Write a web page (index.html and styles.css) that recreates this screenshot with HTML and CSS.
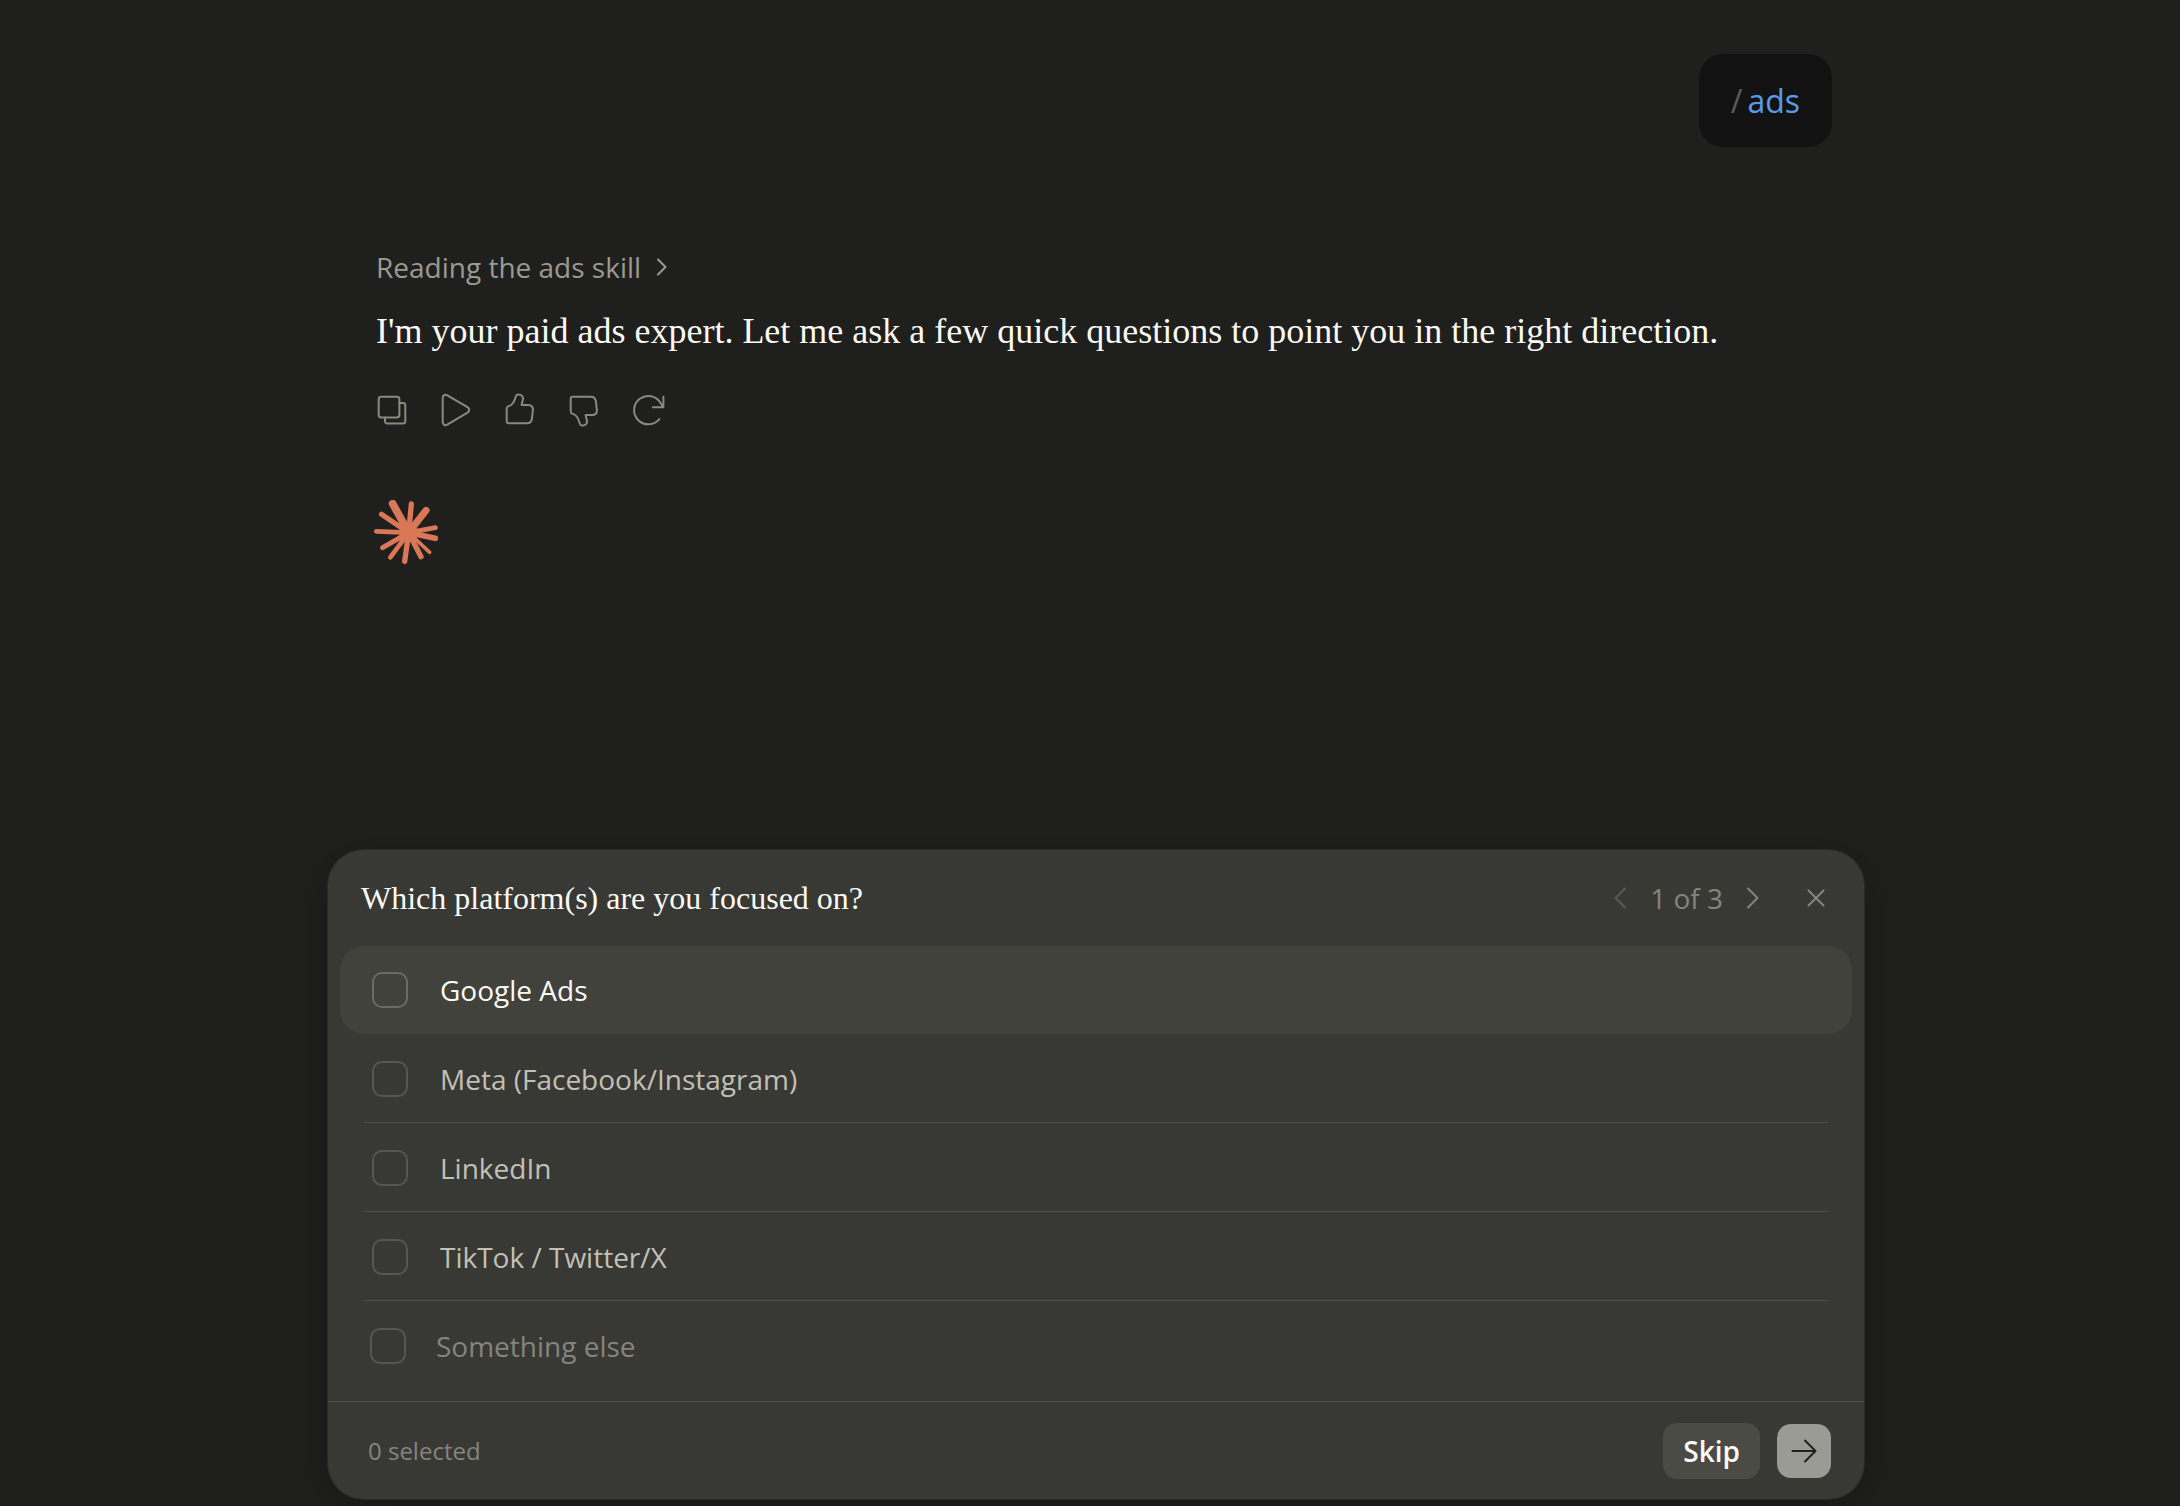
FILE: index.html
```html
<!DOCTYPE html>
<html lang="en">
  <head>
    <meta charset="UTF-8" />
    <meta name="viewport" content="width=device-width, initial-scale=1.0" />
    <title>Ads skill chat</title>
    <link rel="stylesheet" href="styles.css">
  </head>
  <body>
    <main class="chat">
      <div class="bubble"><span class="slash">/</span><span class="command">ads</span></div>

      <section class="reply">
        <button class="skill" type="button">
          Reading the ads skill
          <svg width="10" height="18" viewBox="0 0 10 18"><path d="M1 1.5 8.5 9 1 16.5" /></svg>
        </button>
        <p class="message">I'm your paid ads expert. Let me ask a few quick questions to point you in the right direction.</p>
        <div class="actions">
          <button type="button" aria-label="Copy">
            <svg width="40" height="40" viewBox="0 0 40 40"><rect x="6.7" y="6.7" width="20.7" height="20.7" rx="2.4" /><path d="M13 27.6v3.6a2.2 2.2 0 0 0 2.2 2.2h15.9a2.2 2.2 0 0 0 2.2-2.2V15.3a2.2 2.2 0 0 0-2.2-2.2h-3.6" /></svg>
          </button>
          <button type="button" aria-label="Read aloud">
            <svg width="40" height="40" viewBox="0 0 40 40"><path d="M6.7 8.2c0-2.8 2.2-4.3 4.6-2.9l20.2 11.8c2.2 1.4 2.2 4.2 0 5.6L11.3 34.7c-2.4 1.4-4.6-.1-4.6-2.9z" /></svg>
          </button>
          <button type="button" aria-label="Good response">
            <svg width="40" height="40" viewBox="0 0 40 40"><path d="M6.7 31.1V18.4c0-1.3.8-2 2-2.3 3-.7 5.3-3.9 6.4-7.6l.9-2.5c.6-1.6 2.5-1.8 4.5-1.1 2.3.8 2.8 2.8 2.3 5.1l-1.3 4.9h6.8c3 0 4.8 1.9 4.6 4.7l-1 9c-.4 3-2 4.7-5 4.7h-18c-1.3 0-2.2-.9-2.2-2.2z" /></svg>
          </button>
          <button type="button" aria-label="Bad response">
            <svg width="40" height="40" viewBox="0 0 40 40"><path transform="matrix(1 0 0 -1 0 40)" d="M6.7 31.1V18.4c0-1.3.8-2 2-2.3 3-.7 5.3-3.9 6.4-7.6l.9-2.5c.6-1.6 2.5-1.8 4.5-1.1 2.3.8 2.8 2.8 2.3 5.1l-1.3 4.9h6.8c3 0 4.8 1.9 4.6 4.7l-1 9c-.4 3-2 4.7-5 4.7h-18c-1.3 0-2.2-.9-2.2-2.2z" /></svg>
          </button>
          <button type="button" aria-label="Retry">
            <svg width="40" height="40" viewBox="0 0 40 40"><path d="M31.3 29.1A14.2 14.2 0 1 1 32.6 13l2.6 4.2M35.4 6.8v10.5H24.8" /></svg>
          </button>
        </div>
        <svg class="burst" width="64" height="64" viewBox="42 60 192 192">
          <circle cx="146" cy="158" r="28" />
          <path stroke-width="23" d="M146 158 98 71" />
          <path stroke-width="16" d="m146 158 8-86" />
          <path stroke-width="21" d="m146 158 52-67" />
          <path stroke-width="15" d="m146 158 80-15" />
          <path stroke-width="17" d="m146 158 80 17" />
          <path stroke-width="11" d="m146 158 63 59" />
          <path stroke-width="16" d="m146 158 37 72" />
          <path stroke-width="16" d="m146 158-12 86" />
          <path stroke-width="14" d="m146 158-55 74" />
          <path stroke-width="15" d="m146 158-78 45" />
          <path stroke-width="14" d="m146 158-97-4" />
          <path stroke-width="16" d="m146 158-81-55" />
        </svg>
      </section>
    </main>

    <form class="card">
      <div class="card-head">
        <h2>Which platform(s) are you focused on?</h2>
        <div class="pager">
          <button type="button" class="prev" aria-label="Previous" disabled>
            <svg width="14" height="22" viewBox="0 0 14 22"><path d="M12 1.5 2.5 11l9.5 9.5" /></svg>
          </button>
          <span>1 of 3</span>
          <button type="button" aria-label="Next">
            <svg width="14" height="22" viewBox="0 0 14 22"><path d="M2 1.5 11.5 11 2 20.5" /></svg>
          </button>
        </div>
        <button type="button" class="close" aria-label="Close">
          <svg width="18" height="18" viewBox="0 0 18 18"><path d="m1.5 1.5 15 15m0-15-15 15" /></svg>
        </button>
      </div>

      <div class="options">
        <label class="option active"><input type="checkbox" name="platform" /><span>Google Ads</span></label>
        <label class="option"><input type="checkbox" name="platform" /><span>Meta (Facebook/Instagram)</span></label>
        <label class="option"><input type="checkbox" name="platform" /><span>LinkedIn</span></label>
        <label class="option"><input type="checkbox" name="platform" /><span>TikTok / Twitter/X</span></label>
        <div class="option other">
          <input type="checkbox" name="platform" aria-label="Something else" />
          <input type="text" class="other-text" placeholder="Something else" aria-label="Other platform" />
        </div>
      </div>

      <div class="card-foot">
        <span class="count">0 selected</span>
        <button type="button" class="skip">Skip</button>
        <button type="submit" class="send" aria-label="Send">
          <svg width="26" height="24" viewBox="0 0 26 24"><path d="M1.5 12h23M14 1.5 24.5 12 14 22.5" /></svg>
        </button>
      </div>
    </form>
  </body>
</html>
```
FILE: styles.css
```css
* {
  box-sizing: border-box;
}
body {
  margin: 0;
  padding: 54px 0 7px 12px;
  min-height: 100vh;
  display: flex;
  flex-direction: column;
  align-items: center;
  background-color: #1f1f1d;
  color: #faf9f5;
  font-family: "Open Sans", "Noto Sans", sans-serif;
  font-size: 28px;
  line-height: 40px;
}
button {
  display: flex;
  align-items: center;
  justify-content: center;
  margin: 0;
  padding: 0;
  border: none;
  background: none;
  color: inherit;
  font: inherit;
  cursor: pointer;
}
svg {
  display: block;
  fill: none;
  stroke: currentColor;
  stroke-width: 2;
  stroke-linecap: round;
  stroke-linejoin: round;
}

/* conversation */
.chat {
  width: 100%;
  max-width: 1536px;
  padding: 0 32px 0 48px;
  display: flex;
  flex-direction: column;
}
.bubble {
  align-self: flex-end;
  padding: 26px 32px;
  border-radius: 24px;
  background-color: #121212;
  font-size: 32px;
  line-height: 41px;
}
.slash {
  margin-right: 5px;
  color: #5c5b55;
}
.command {
  color: #5a9be8;
}
.reply {
  margin-top: 100px;
}
.skill {
  gap: 16px;
  color: #9b9a92;
}
.message {
  margin: 20px 0 0;
  font-family: "Liberation Serif", serif;
  font-size: 36px;
  line-height: 48px;
}
.actions {
  display: flex;
  margin: 23px 0 0 -16px;
  color: #8a8981;
}
.actions button {
  width: 64px;
  height: 64px;
}
.burst {
  margin: 58px 0 0 -2px;
  color: #d97757;
}
.burst circle {
  fill: currentColor;
  stroke: none;
}

/* question card */
.card {
  width: 100%;
  max-width: 1536px;
  margin: auto 0 0;
  border-radius: 36px;
  background-color: #383834;
  box-shadow: 0 0 0 1px #2b2b28, 0 8px 40px rgba(0, 0, 0, 0.25);
}
.card-head {
  display: flex;
  align-items: center;
  height: 96px;
  padding: 0 39px 0 33px;
  color: #85847d;
}
.card-head h2 {
  flex: 1;
  margin: 0;
  color: #faf9f5;
  font-family: "Liberation Serif", serif;
  font-size: 32px;
  font-weight: 400;
}
.pager {
  display: flex;
  align-items: center;
  gap: 23px;
}
.prev {
  color: #5a5a54;
}
.close {
  margin-left: 47px;
}
.options {
  padding: 0 12px 11px;
}
.option {
  position: relative;
  display: flex;
  align-items: center;
  height: 89px;
  padding: 0 32px;
  color: #c2c0b6;
}
/* divider under every row except the highlighted and the last one */
.option:not(.active):not(.other)::after {
  content: "";
  position: absolute;
  left: 24px;
  right: 24px;
  bottom: 0;
  height: 1px;
  background-color: #50504a;
}
.option input[type="checkbox"] {
  appearance: none;
  width: 36px;
  height: 36px;
  margin: 0 32px 0 0;
  border: 2px solid #575751;
  border-radius: 10px;
}
.option.active {
  height: 88px;
  border-radius: 24px;
  background-color: #42423d;
  color: #faf9f5;
}
.option.active input[type="checkbox"] {
  border-color: #6b6a64;
}
.option.other {
  padding-left: 30px;
}
.option.other input[type="checkbox"] {
  margin-right: 30px;
}
.other-text {
  flex: 1;
  padding: 0;
  border: none;
  outline: none;
  background: none;
  color: #faf9f5;
  font: inherit;
}
.other-text::placeholder {
  color: #85847d;
  opacity: 1;
}
.card-foot {
  display: flex;
  align-items: center;
  gap: 17px;
  height: 98px;
  padding: 0 33px 0 40px;
  border-top: 1px solid #50504a;
}
.count {
  flex: 1;
  color: #85847d;
  font-size: 24px;
}
.skip {
  height: 56px;
  padding: 0 20px;
  border-radius: 14px;
  background-color: #4b4b46;
  font-weight: 600;
}
.send {
  width: 54px;
  height: 54px;
  border-radius: 14px;
  background-color: #9b9b95;
  color: #1f1f1d;
}
```
